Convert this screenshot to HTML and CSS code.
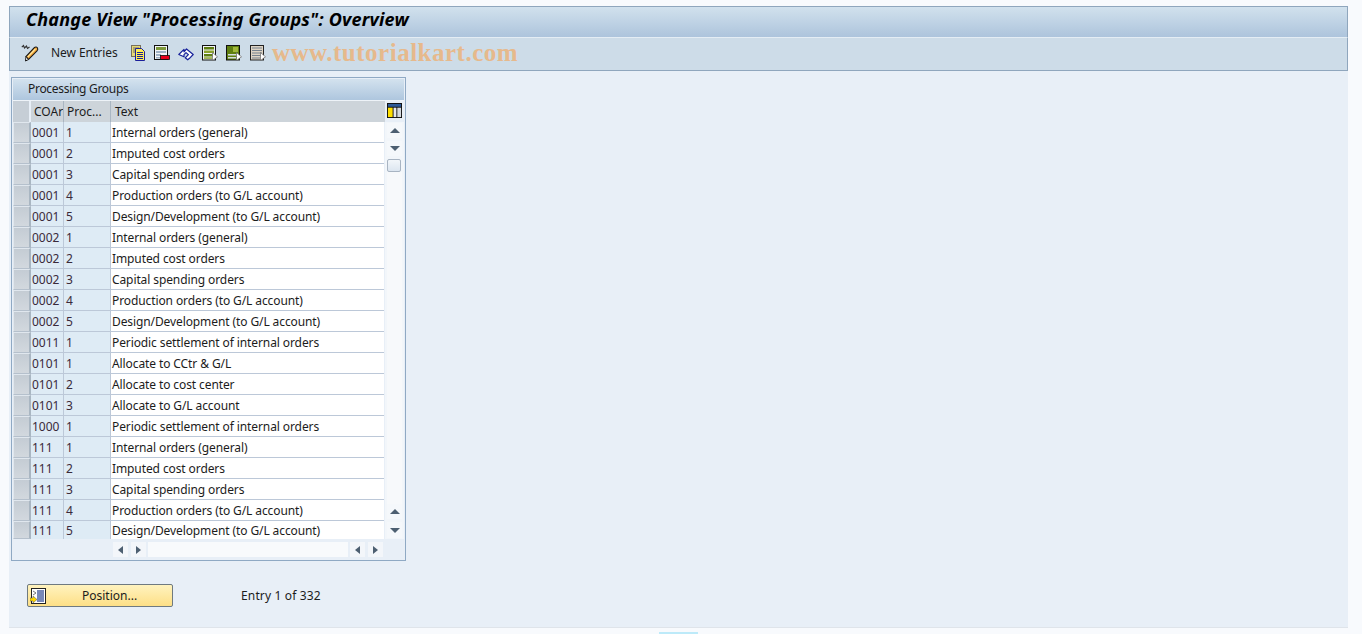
FILE: index.html
```html
<!DOCTYPE html>
<html lang="en">
<head>
<meta charset="utf-8">
<title>Change View "Processing Groups": Overview</title>
<link rel="stylesheet" href="styles.css">
</head>
<body>
<main class="window">
  <header class="titlebar"><h1>Change View "Processing Groups": Overview</h1></header>
  <nav class="toolbar">
    <svg class="icon pencil" viewBox="0 0 18 18" width="18" height="18"><path d="M7.500 15.500L5 12.500 13.500 3.500c1-.8 2.500-.5 3 .5s.3 2-.5 2.800z" fill="#f7a93a" stroke="#1a1a1a" stroke-width="1.100"/><path d="M5 12.500L4.500 17 7.500 15.500z" fill="#fff" stroke="#1a1a1a"/><path d="M6.800 12.800l7.500-7.800" stroke="#ffe9a0" stroke-width="1.200"/><path d="M.8 3.200L2.500 1.500 3.500 4 5.500 2 6.500 4.500 8.500 3" fill="none" stroke="#333" stroke-width="1.100"/></svg>
    <span class="new-entries">New Entries</span>
    <svg class="icon copy" viewBox="0 0 16 16" width="16" height="16"><rect x="1.500" y=".5" width="9" height="11" fill="#e6d878" stroke="#77705a"/><path d="M3 3h6M3 5h2M3 7h2" stroke="#77705a"/><path d="M5.500 3.500h6l3 3v9h-9z" fill="#ffee50" stroke="#1a1f9c"/><path d="M7 7.500h6M7 9.500h6M7 11.500h6M7 13.500h6" stroke="#1a1f9c"/></svg>
    <svg class="icon del" viewBox="0 0 16 16" width="16" height="16"><rect x=".5" y=".5" width="13" height="14" fill="#f4f6f8" stroke="#111"/><rect x="2" y="2" width="10" height="3" fill="#7e9a3c"/><rect x="2" y="6" width="10" height="2" fill="#9fb2c6"/><rect x="2" y="9" width="5" height="2" fill="#9fb2c6"/><rect x="2" y="12" width="5" height="1.500" fill="#9fb2c6"/><rect x="6.500" y="10.500" width="9" height="4" fill="#e8001c" stroke="#111" stroke-width=".8"/></svg>
    <svg class="icon undo" viewBox="0 0 16 16" width="16" height="16"><path d="M.8 9.500L6 4.300v2.500L8.500 4l6.700 5.500-3.700 3.800-1.800 1.500-2.500-2 3.200-3.200-2.400-2-2 2v2.200z" fill="#fff" stroke="#16209a" stroke-width="1.200" stroke-linejoin="round"/></svg>
    <svg class="icon sel" viewBox="0 0 16 16" width="16" height="16"><rect x=".5" y=".5" width="13" height="14.500" fill="#f2f4f6" stroke="#111"/><rect x="2" y="2" width="10" height="2.500" fill="#5f7f10"/><rect x="2" y="5.500" width="10" height="2.500" fill="#8ba32c"/><rect x="2" y="9" width="10" height="2.500" fill="#5f7f10"/><rect x="2" y="12.300" width="8" height="1.500" fill="#8ba32c"/><path d="M10.500 7.500l5 4.300-5 3.700z" fill="#fff" stroke="#666" stroke-width=".7"/></svg>
    <svg class="icon sel" viewBox="0 0 16 16" width="16" height="16"><rect x=".5" y=".5" width="13" height="14.500" fill="#5f7f10" stroke="#111"/><rect x="7" y="2" width="5" height="5" fill="#a0b83a"/><rect x="2" y="9" width="10" height="1.500" fill="#d5dde2"/><rect x="2" y="12" width="8" height="1.500" fill="#d5dde2"/><path d="M10.500 7.500l5 4.300-5 3.700z" fill="#fff" stroke="#666" stroke-width=".7"/></svg>
    <svg class="icon sel" viewBox="0 0 16 16" width="16" height="16"><rect x=".5" y=".5" width="13" height="14.500" fill="#ded4c4" stroke="#222"/><path d="M2 3h10M2 5.500h10M2 8h10M2 10.500h10M2 13h8" stroke="#76828e" stroke-width="1.200"/><path d="M10.500 7.500l5 4.300-5 3.700z" fill="#fff" stroke="#666" stroke-width=".7"/></svg>
    <span class="watermark">www.tutorialkart.com</span>
  </nav>

  <section class="tablepanel">
    <h2 class="tabletitle">Processing Groups</h2>
    <div class="tablehead">
      <span class="corner"></span>
      <span class="hcell h-coar">COAr</span>
      <span class="hcell h-proc">Proc...</span>
      <span class="hcell h-text">Text</span>
      <span class="settings">
        <svg viewBox="0 0 16 16" width="15" height="15"><rect width="16" height="16" fill="#111"/><rect x="1" y="1" width="14" height="3" fill="#2d5a98"/><rect x="1" y="5" width="5" height="10" fill="#ffdf00"/><rect x="7" y="5" width="3" height="10" fill="#e6e9ec"/><rect x="11" y="5" width="4" height="10" fill="#d4d9de"/></svg>
      </span>
    </div>
    <div class="tablebody">
      <div class="rows">
        <div class="row"><span class="sel-btn"></span><span class="cell key">0001</span><span class="cell key">1</span><span class="cell txt">Internal orders (general)</span></div>
        <div class="row"><span class="sel-btn"></span><span class="cell key">0001</span><span class="cell key">2</span><span class="cell txt">Imputed cost orders</span></div>
        <div class="row"><span class="sel-btn"></span><span class="cell key">0001</span><span class="cell key">3</span><span class="cell txt">Capital spending orders</span></div>
        <div class="row"><span class="sel-btn"></span><span class="cell key">0001</span><span class="cell key">4</span><span class="cell txt">Production orders (to G/L account)</span></div>
        <div class="row"><span class="sel-btn"></span><span class="cell key">0001</span><span class="cell key">5</span><span class="cell txt">Design/Development (to G/L account)</span></div>
        <div class="row"><span class="sel-btn"></span><span class="cell key">0002</span><span class="cell key">1</span><span class="cell txt">Internal orders (general)</span></div>
        <div class="row"><span class="sel-btn"></span><span class="cell key">0002</span><span class="cell key">2</span><span class="cell txt">Imputed cost orders</span></div>
        <div class="row"><span class="sel-btn"></span><span class="cell key">0002</span><span class="cell key">3</span><span class="cell txt">Capital spending orders</span></div>
        <div class="row"><span class="sel-btn"></span><span class="cell key">0002</span><span class="cell key">4</span><span class="cell txt">Production orders (to G/L account)</span></div>
        <div class="row"><span class="sel-btn"></span><span class="cell key">0002</span><span class="cell key">5</span><span class="cell txt">Design/Development (to G/L account)</span></div>
        <div class="row"><span class="sel-btn"></span><span class="cell key">0011</span><span class="cell key">1</span><span class="cell txt">Periodic settlement of internal orders</span></div>
        <div class="row"><span class="sel-btn"></span><span class="cell key">0101</span><span class="cell key">1</span><span class="cell txt">Allocate to CCtr &amp; G/L</span></div>
        <div class="row"><span class="sel-btn"></span><span class="cell key">0101</span><span class="cell key">2</span><span class="cell txt">Allocate to cost center</span></div>
        <div class="row"><span class="sel-btn"></span><span class="cell key">0101</span><span class="cell key">3</span><span class="cell txt">Allocate to G/L account</span></div>
        <div class="row"><span class="sel-btn"></span><span class="cell key">1000</span><span class="cell key">1</span><span class="cell txt">Periodic settlement of internal orders</span></div>
        <div class="row"><span class="sel-btn"></span><span class="cell key">111</span><span class="cell key">1</span><span class="cell txt">Internal orders (general)</span></div>
        <div class="row"><span class="sel-btn"></span><span class="cell key">111</span><span class="cell key">2</span><span class="cell txt">Imputed cost orders</span></div>
        <div class="row"><span class="sel-btn"></span><span class="cell key">111</span><span class="cell key">3</span><span class="cell txt">Capital spending orders</span></div>
        <div class="row"><span class="sel-btn"></span><span class="cell key">111</span><span class="cell key">4</span><span class="cell txt">Production orders (to G/L account)</span></div>
        <div class="row last"><span class="sel-btn"></span><span class="cell key">111</span><span class="cell key">5</span><span class="cell txt">Design/Development (to G/L account)</span></div>
      </div>
      <div class="vscroll">
        <span class="sbtn"><i class="arr up"></i></span>
        <span class="sbtn"><i class="arr down"></i></span>
        <span class="thumb"></span>
        <span class="track"></span>
        <span class="sbtn"><i class="arr up"></i></span>
        <span class="sbtn tall"><i class="arr down"></i></span>
      </div>
    </div>
    <div class="hscroll">
      <span class="hbtn"><i class="arr left"></i></span>
      <span class="hbtn"><i class="arr right"></i></span>
      <span class="htrack"></span>
      <span class="hbtn"><i class="arr left"></i></span>
      <span class="hbtn"><i class="arr right"></i></span>
    </div>
  </section>

  <div class="actions">
    <button class="position" type="button">
      <svg viewBox="0 0 16 16" width="16" height="16"><rect x="1.500" y=".5" width="14" height="15" fill="#fff" stroke="#222"/><rect x="7" y="2" width="7" height="12" fill="#7888b8"/><path d="M3 3l3 2-3 2" fill="none" stroke="#777"/><path d="M0 10h3V8l4 3.500L3 15v-2H0z" fill="#ffd800" stroke="#555" stroke-width=".5"/></svg>
      <span class="position-label">Position...</span>
    </button>
    <span class="entry">Entry 1 of 332</span>
  </div>
</main>
<div class="footer"><span class="footer-tab"></span></div>
</body>
</html>
```
FILE: styles.css
```css
* { box-sizing: border-box; }
html, body { margin: 0; height: 634px; overflow: hidden; }
body {
  background: #f8fafd;
  font-family: "Noto Sans", "Open Sans", sans-serif;
  font-size: 12px;
  color: #1c1c1c;
  padding-top: 6px;
  position: relative;
}
.window {
  width: 1339px;
  height: 622px;
  margin-left: 9px;
  background: #e8eff7;
  border-bottom: 1px solid #dfe4ea;
  display: flex;
  flex-direction: column;
}
.titlebar {
  height: 32px;
  flex: none;
  border: 1px solid #8fa6bd;
  border-bottom: 1px solid #e4edf4;
  background: linear-gradient(#d1e1ed, #adc4dc);
  display: flex;
  align-items: center;
  padding: 0 0 6px 16px;
}
.titlebar h1 {
  margin: 0;
  font-size: 18px;
  letter-spacing: .2px;
  font-weight: 700;
  font-style: italic;
  color: #000;
  white-space: nowrap;
}
.toolbar {
  height: 33px;
  flex: none;
  background: #cddce8;
  border: 1px solid #8fa6bd;
  border-top: 0;
  display: flex;
  align-items: center;
  padding: 0 0 3px 11px;
}
.icon { flex: none; display: block; }
.new-entries { margin-left: 12px; width: 79px; white-space: nowrap; letter-spacing: -.05px; }
.del { margin-left: 8px; }
.undo { margin-left: 8px; }
.sel { margin-left: 8px; }
.watermark {
  margin-left: 6px;
  font-family: "Liberation Serif", serif;
  font-weight: 700;
  font-size: 25px;
  letter-spacing: .5px;
  color: #e6b98c;
  white-space: nowrap;
}
.tablepanel {
  width: 395px;
  height: 484px;
  flex: none;
  margin: 6px 0 0 2px;
  border: 1px solid #8fa9c4;
  padding: 1px;
  background: #e8eff7;
}
.tabletitle {
  margin: 0;
  height: 22px;
  line-height: 20px;
  padding-left: 15px;
  font-size: 12px;
  font-weight: 400;
  letter-spacing: -.3px;
  background: linear-gradient(#d3e2ee, #aec6de);
  border-bottom: 1px solid #eef3f8;
}
.tablehead {
  height: 21px;
  display: flex;
  background: #cdd4da;
}
.corner { width: 18px; background: #c6ced6; border-right: 2px solid #e8eff7; }
.hcell {
  display: flex;
  align-items: center;
  border-right: 1px solid #a9b6c2;
  padding-left: 3px;
  white-space: nowrap;
  overflow: hidden;
}
.h-coar { width: 33px; }
.h-proc { width: 47px; padding-left: 3px; }
.h-text { width: 274px; border-right: 0; padding-left: 4px; }
.settings { width: 19px; display: flex; align-items: flex-start; padding: 2px 0 0 2px; background: #e8eff7; }
.tablebody { display: flex; height: 417px; }
.rows { width: 372px; display: flex; flex-direction: column; }
.row {
  height: 21px;
  display: grid;
  grid-template-columns: 18px 33px 47px 273px;
  flex: none;
}
.row.last { height: 18px; }
.sel-btn {
  background: linear-gradient(#c4ccd4, #d2d8de);
  border: 1px solid #e0e7ee;
  border-right: 2px solid #a9b6c2;
  border-bottom: 1px solid #b5c0cc;
}
.cell {
  line-height: 22px;
  white-space: nowrap;
  overflow: hidden;
  border-bottom: 1px solid #bcc8d8;
}
.key {
  background: #deebf5;
  border-right: 1px solid #bcc8d8;
  padding-left: 1px;
  color: #3a2a3a;
}
.key + .key { padding-left: 2px; }
.txt { background: #fff; padding-left: 1px; letter-spacing: -.1px; }
.row.last .cell { border-bottom: 0; line-height: 20px; }
.vscroll {
  width: 19px;
  display: flex;
  flex-direction: column;
  align-items: flex-start;
  background: #f2f6fa;
  padding: 1px 0 1px 2px;
}
.sbtn {
  width: 15px;
  height: 15px;
  margin-bottom: 3px;
  flex: none;
  display: flex;
  align-items: center;
  justify-content: center;
  background: #f5f8fb;
}
.sbtn.tall { height: 16px; margin-bottom: 0; }
.thumb {
  width: 14px;
  height: 13px;
  border: 1px solid #a8b4c2;
  border-radius: 2px;
  background: linear-gradient(#f2f6fa, #dce6f0);
  flex: none;
}
.track { flex: 1; background: #f7f9fb; width: 15px; }
.arr { display: block; width: 0; height: 0; border-style: solid; border-color: transparent; }
.arr.up { border-width: 0 5px 5px; border-bottom-color: #4d5f71; }
.arr.down { border-width: 5px 5px 0; border-top-color: #4d5f71; }
.arr.left { border-width: 4px 5px 4px 0; border-right-color: #4d5f71; }
.arr.right { border-width: 4px 0 4px 5px; border-left-color: #4d5f71; }
.hscroll {
  height: 20px;
  display: flex;
  align-items: flex-start;
  gap: 3px;
  padding: 3px 0 0 100px;
}
.hbtn {
  width: 15px;
  height: 15px;
  background: #f3f6fa;
  display: flex;
  align-items: center;
  justify-content: center;
  flex: none;
}
.htrack { width: 200px; height: 15px; margin: 0 -1px; background: #f8fafc; }
.actions {
  height: 23px;
  flex: none;
  margin: 23px 0 0 18px;
  display: flex;
  align-items: center;
}
.position {
  width: 146px;
  height: 23px;
  padding: 0 0 0 2px;
  border: 1px solid #6f7a80;
  border-radius: 2px;
  background: linear-gradient(#fff3bf, #fddf86);
  font: inherit;
  color: inherit;
  display: flex;
  align-items: center;
}
.position-label { margin-left: 36px; }
.entry { margin-left: 68px; letter-spacing: .15px; }
.footer { height: 7px; position: relative; }
.footer-tab {
  position: absolute;
  left: 659px;
  top: 4px;
  width: 39px;
  height: 3px;
  background: #bdeaf9;
}
```
